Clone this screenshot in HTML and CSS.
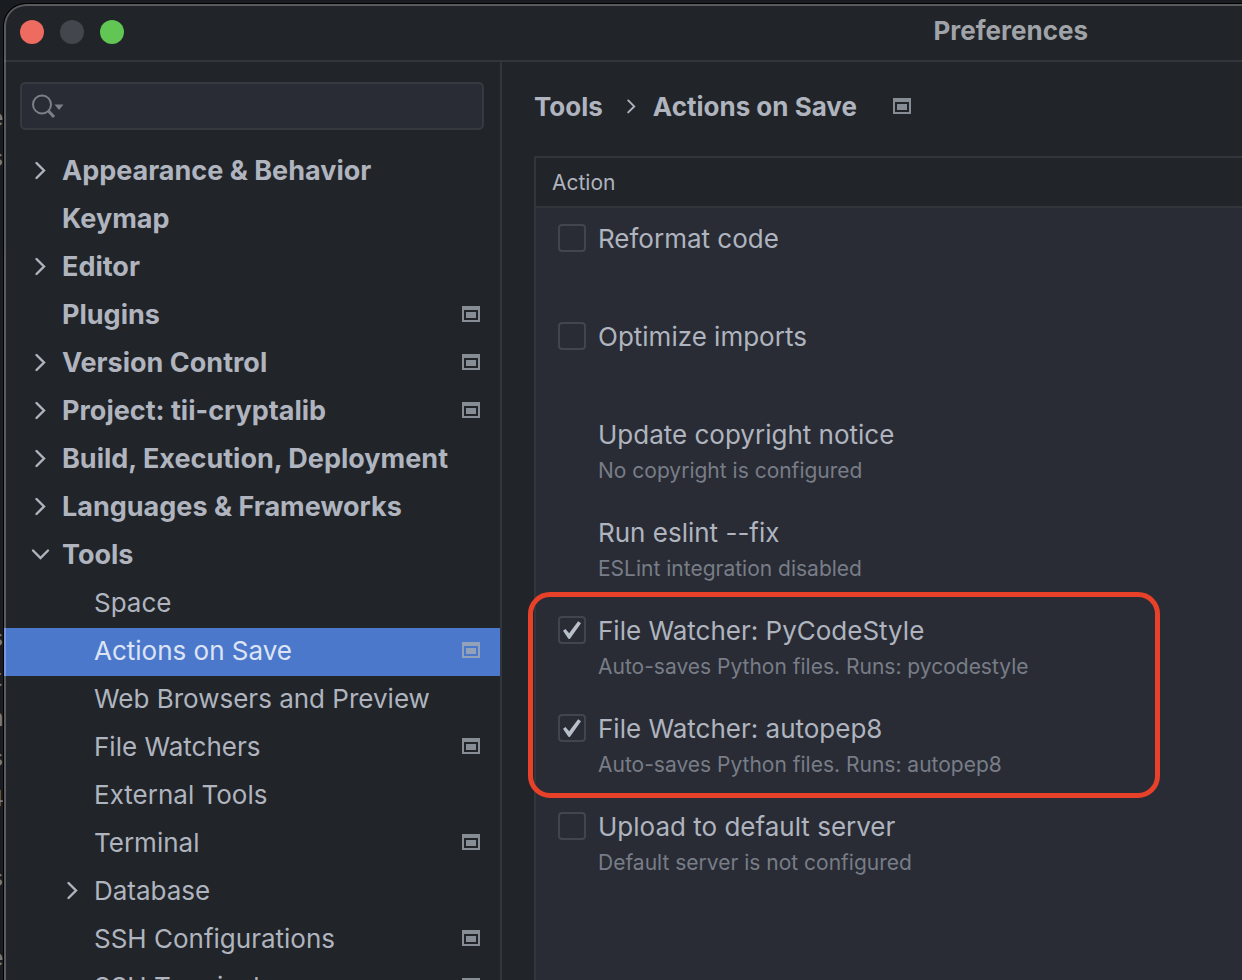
FILE: index.html
```html
<!DOCTYPE html>
<html lang="en">
<head>
    <meta charset="UTF-8">
    <meta name="viewport" content="width=device-width, initial-scale=1.0">
    <title>Preferences</title>
    <link rel="stylesheet" href="styles.css">
</head>
<body>

    <!-- Shared icons -->
    <svg class="sprite" aria-hidden="true">
        <symbol id="right" viewBox="0 0 20 20"><path d="M6.500 3L14 10.500L6.500 18" fill="none" stroke="currentColor" stroke-width="2.400" stroke-linecap="round"/></symbol>
        <symbol id="down" viewBox="0 0 20 20"><path d="M3 6.500L10.500 14L18 6.500" fill="none" stroke="currentColor" stroke-width="2.400" stroke-linecap="round"/></symbol>
        <symbol id="project" viewBox="0 0 18 16"><path fill-rule="evenodd" d="M0 0H18V16H0ZM2 4V14H16V4ZM4 6H14V12H4Z" fill="currentColor"/></symbol>
    </svg>

    <!-- Editor behind the window -->
    <div class="editor" aria-hidden="true">
        <p>e</p><p>s</p><p></p><p></p><p></p><p></p><p>.</p><p></p><p></p><p></p><p></p><p>:</p><p></p><p>s</p><p>t</p><p>n</p><p>s</p><p>4</p><p></p><p>s</p><p></p><p>e</p>
    </div>

    <div class="window">
        <header class="titlebar">
            <button class="dot close" aria-label="Close"></button>
            <button class="dot minimize" aria-label="Minimize"></button>
            <button class="dot zoom" aria-label="Zoom"></button>
            <h1>Preferences</h1>
        </header>

        <div class="content">
            <aside class="sidebar">
                <div class="search">
                    <svg width="34" height="26" viewBox="0 0 34 26" fill="none" stroke="currentColor">
                        <circle cx="10" cy="11.500" r="9" stroke-width="2"/>
                        <path d="M16.500 18L22 24" stroke-width="3"/>
                        <path d="M22.500 11.500H31.500L27 17Z" fill="currentColor" stroke="none"/>
                    </svg>
                    <input type="text" aria-label="Search settings">
                </div>

                <nav>
                    <ul class="tree">
                        <li><a href="#"><svg class="arrow"><use href="#right"/></svg>Appearance &amp; Behavior</a></li>
                        <li><a href="#"><span class="arrow"></span>Keymap</a></li>
                        <li><a href="#"><svg class="arrow"><use href="#right"/></svg>Editor</a></li>
                        <li><a href="#"><span class="arrow"></span>Plugins<svg class="project"><use href="#project"/></svg></a></li>
                        <li><a href="#"><svg class="arrow"><use href="#right"/></svg>Version Control<svg class="project"><use href="#project"/></svg></a></li>
                        <li><a href="#"><svg class="arrow"><use href="#right"/></svg>Project: tii-cryptalib<svg class="project"><use href="#project"/></svg></a></li>
                        <li><a href="#"><svg class="arrow"><use href="#right"/></svg>Build, Execution, Deployment</a></li>
                        <li><a href="#"><svg class="arrow"><use href="#right"/></svg>Languages &amp; Frameworks</a></li>
                        <li>
                            <a href="#"><svg class="arrow"><use href="#down"/></svg>Tools</a>
                            <ul class="subtree">
                                <li><a href="#"><span class="arrow"></span>Space</a></li>
                                <li><a href="#" class="active"><span class="arrow"></span>Actions on Save<svg class="project"><use href="#project"/></svg></a></li>
                                <li><a href="#"><span class="arrow"></span>Web Browsers and Preview</a></li>
                                <li><a href="#"><span class="arrow"></span>File Watchers<svg class="project"><use href="#project"/></svg></a></li>
                                <li><a href="#"><span class="arrow"></span>External Tools</a></li>
                                <li><a href="#"><span class="arrow"></span>Terminal<svg class="project"><use href="#project"/></svg></a></li>
                                <li><a href="#"><svg class="arrow"><use href="#right"/></svg>Database</a></li>
                                <li><a href="#"><span class="arrow"></span>SSH Configurations<svg class="project"><use href="#project"/></svg></a></li>
                                <li><a href="#"><span class="arrow"></span>SSH Terminal<svg class="project"><use href="#project"/></svg></a></li>
                            </ul>
                        </li>
                    </ul>
                </nav>
            </aside>

            <main>
                <div class="breadcrumb">
                    <a href="#">Tools</a>
                    <svg class="separator"><use href="#right"/></svg>
                    <h2>Actions on Save</h2>
                    <svg class="project"><use href="#project"/></svg>
                </div>

                <div class="actions">
                    <table>
                        <thead>
                            <tr><th>Action</th></tr>
                        </thead>
                        <tbody>
                            <tr><td>
                                <label class="option"><input type="checkbox">Reformat code</label>
                            </td></tr>
                            <tr><td>
                                <label class="option"><input type="checkbox">Optimize imports</label>
                            </td></tr>
                            <tr><td>
                                <div class="option indent">Update copyright notice</div>
                                <p>No copyright is configured</p>
                            </td></tr>
                            <tr><td>
                                <div class="option indent">Run eslint --fix</div>
                                <p>ESLint integration disabled</p>
                            </td></tr>
                        </tbody>
                        <tbody class="highlight">
                            <tr><td>
                                <label class="option"><input type="checkbox" checked>File Watcher: PyCodeStyle</label>
                                <p>Auto-saves Python files. Runs: pycodestyle</p>
                            </td></tr>
                            <tr><td>
                                <label class="option"><input type="checkbox" checked>File Watcher: autopep8</label>
                                <p>Auto-saves Python files. Runs: autopep8</p>
                            </td></tr>
                        </tbody>
                        <tbody>
                            <tr><td>
                                <label class="option"><input type="checkbox">Upload to default server</label>
                                <p>Default server is not configured</p>
                            </td></tr>
                        </tbody>
                    </table>
                </div>
            </main>
        </div>
    </div>

</body>
</html>
```
FILE: styles.css
```css
*, *::before, *::after {
    margin: 0;
    padding: 0;
    box-sizing: border-box;
}

body {
    height: 100vh;
    padding: 4px 0 0 4px;
    overflow: hidden;
    position: relative;
    background-color: #191c20;
    color: #afb4bf;
    font-family: Inter, "Liberation Sans", sans-serif;
    font-size: 26px;
}

a {
    color: inherit;
    text-decoration: none;
}

.sprite {
    position: absolute;
    width: 0;
    height: 0;
}

/* Text of the editor that shows left of the window */
.editor {
    position: absolute;
    left: 0;
    top: 100px;
    width: 4px;
    color: #777c84;
    font-family: "Liberation Mono", monospace;
    font-size: 24px;
    line-height: 40px;
}

.editor p {
    display: flex;
    justify-content: flex-end;
    height: 40px;
}

.window {
    position: relative;
    display: flex;
    flex-direction: column;
    height: 100%;
    overflow: hidden;
    background-color: #212429;
    border-top-left-radius: 22px;
    box-shadow: 0 0 0 1px #000;
}

/* Window edge, drawn over the content */
.window::after {
    content: "";
    position: absolute;
    inset: 0;
    border: solid rgba(255, 255, 255, 0.25);
    border-width: 2px 0 0 2px;
    border-top-left-radius: 22px;
    pointer-events: none;
}

.titlebar {
    display: flex;
    align-items: center;
    flex-shrink: 0;
    gap: 16px;
    height: 58px;
    padding: 0 154px 0 16px;
    border-bottom: 2px solid #32363c;
}

.titlebar h1 {
    margin-left: auto;
    padding-bottom: 4px;
    font-size: 26px;
    font-weight: 700;
    color: #a0a3a8;
}

.dot {
    width: 24px;
    height: 24px;
    border: none;
    border-radius: 50%;
}

.close {
    background-color: #ed6b60;
}

.minimize {
    background-color: #43464c;
}

.zoom {
    background-color: #62c655;
}

.content {
    display: flex;
    flex: 1;
    min-height: 0;
}

/* Sidebar */
.sidebar {
    flex: 0 0 498px;
    padding-top: 20px;
    border-right: 2px solid #32363c;
    overflow: hidden;
}

.search {
    display: flex;
    align-items: center;
    gap: 8px;
    height: 48px;
    margin: 0 16px 18px;
    padding: 0 10px;
    background-color: #292c35;
    border: 2px solid #353940;
    border-radius: 5px;
    color: #7b8088;
}

.search input {
    flex: 1;
    min-width: 0;
    background: none;
    border: none;
    outline: none;
    color: #afb4bf;
    font: inherit;
}

ul {
    list-style: none;
}

.tree a {
    display: flex;
    align-items: center;
    height: 48px;
    padding: 0 20px 4px 26px;
    font-size: 27px;
    font-weight: 700;
    white-space: nowrap;
}

.tree .subtree a {
    padding-left: 58px;
    font-size: 26px;
    font-weight: 400;
}

.tree .subtree .active {
    background-color: #4c78cc;
    color: #dce4f4;
}

.arrow {
    flex-shrink: 0;
    width: 20px;
    height: 20px;
    margin-right: 12px;
}

.project {
    flex-shrink: 0;
    width: 18px;
    height: 16px;
    color: #868d95;
}

.tree .project {
    margin-left: auto;
}

.tree .active .project {
    color: #93a2b8;
}

/* Right side */
main {
    display: flex;
    flex-direction: column;
    flex: 1;
    min-width: 0;
    padding: 24px 0 0 32px;
}

.breadcrumb {
    display: flex;
    align-items: center;
    height: 40px;
    margin-bottom: 30px;
    font-weight: 700;
}

.breadcrumb h2 {
    font-size: 26px;
    font-weight: 700;
}

.separator {
    width: 16px;
    height: 16px;
    margin: 0 14px 0 20px;
}

.breadcrumb .project {
    margin-left: 36px;
}

.actions {
    flex: 1;
    background-color: #292c35;
    border: solid #32363c;
    border-width: 2px 0 0 2px;
}

table {
    width: 100%;
    border-spacing: 0;
}

th {
    height: 50px;
    padding-left: 16px;
    background-color: #212429;
    border-bottom: 2px solid #32363c;
    font-size: 21px;
    font-weight: 400;
    text-align: left;
}

td {
    height: 98px;
    padding: 14px 22px 12px;
    vertical-align: top;
}

.option {
    display: flex;
    align-items: center;
    gap: 12px;
    line-height: 34px;
}

.indent {
    padding-left: 40px;
}

td p {
    padding-left: 40px;
    color: #787d87;
    font-size: 21px;
    line-height: 38px;
}

input[type="checkbox"] {
    appearance: none;
    display: grid;
    place-items: center;
    width: 28px;
    height: 28px;
    margin-bottom: 2px;
    border: 2px solid #41454d;
    border-radius: 4px;
}

input[type="checkbox"]:checked::before {
    content: "";
    width: 18px;
    height: 18px;
    background-color: #b9bfca;
    clip-path: polygon(0 54%, 14% 44%, 34% 68%, 84% 2%, 100% 12%, 38% 100%, 30% 98%);
}

/* Frame round the file watchers */
.highlight {
    position: relative;
}

.highlight tr:first-child td::before {
    content: "";
    position: absolute;
    inset: -8px auto -2px -8px;
    width: 632px;
    border: 5px solid #e8412a;
    border-radius: 22px;
    pointer-events: none;
}
```
